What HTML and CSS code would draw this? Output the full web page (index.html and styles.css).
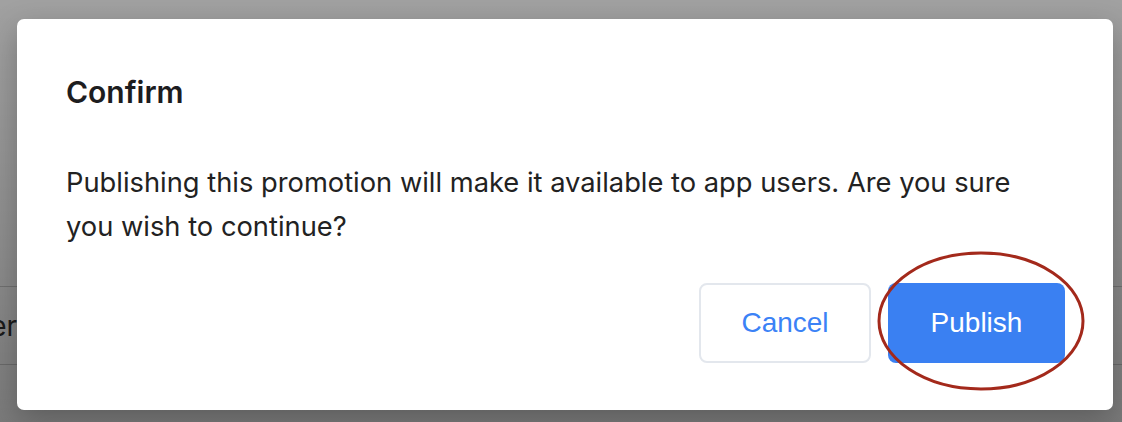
FILE: index.html
```html
<!DOCTYPE html>
<html>
<head>
    <link rel="stylesheet" href="styles.css">
</head>
<body>
    <div class="page">
        <div class="field"><span class="field-text">Enter</span></div>
    </div>
    <div class="overlay">
        <div class="dialog">
            <h2 class="dialog-title">Confirm</h2>
            <p class="dialog-body">Publishing this promotion will make it available to app users. Are you sure you wish to continue?</p>
            <div class="dialog-actions">
                <button class="btn btn-cancel">Cancel</button>
                <button class="btn btn-publish">Publish</button>
            </div>
            <!-- red annotation ring around the publish button -->
            <svg class="ring" width="212" height="142" viewBox="0 0 212 142">
                <ellipse cx="106" cy="71" rx="102" ry="68" fill="none" stroke="#a3291b" stroke-width="3"/>
            </svg>
        </div>
    </div>
</body>
</html>
```

FILE: styles.css
```css
html, body {
    margin: 0;
    height: 100%;
}
body {
    background: #ffffff;
    font-family: Inter, "Noto Sans", sans-serif;
    overflow: hidden;
}
.page {
    padding-top: 286px;
}
.field {
    height: 77px;
    border-top: 1px solid #d0d0d0;
    border-bottom: 1px solid #d0d0d0;
    display: flex;
    align-items: center;
}
.field-text {
    margin-left: -52px;
    font-size: 28px;
    color: #333;
}
.overlay {
    position: absolute;
    inset: 0;
    background: linear-gradient(180deg, rgba(0,0,0,0.37) 0%, rgba(0,0,0,0.45) 60%, rgba(0,0,0,0.52) 100%);
}
.dialog {
    position: absolute;
    left: 17px;
    top: 19px;
    width: 1096px;
    height: 391px;
    box-sizing: border-box;
    padding: 51px 48px 47px 49px;
    background: #fff;
    border-radius: 7px;
    box-shadow: 0 10px 30px rgba(0,0,0,0.25);
    display: flex;
    flex-direction: column;
}
.dialog-title {
    margin: 0;
    font-size: 30px;
    font-weight: 600;
    line-height: 44px;
    color: #1d1d1f;
}
.dialog-body {
    margin: 47px 0 0;
    font-size: 27.3px;
    line-height: 44px;
    color: #222;
}
.dialog-actions {
    margin-top: auto;
    display: flex;
    justify-content: flex-end;
    gap: 17px;
}
.btn {
    height: 80px;
    border-radius: 8px;
    font-family: "Liberation Sans", Arial, sans-serif;
    font-size: 28px;
    cursor: pointer;
}
.btn-cancel {
    width: 172px;
    background: #fff;
    border: 2px solid #e3e7ed;
    color: #3b82f6;
}
.btn-publish {
    width: 177px;
    background: #3a80f2;
    border: none;
    color: #fff;
}
.ring {
    position: absolute;
    left: 858px;
    top: 231px;
}
```
